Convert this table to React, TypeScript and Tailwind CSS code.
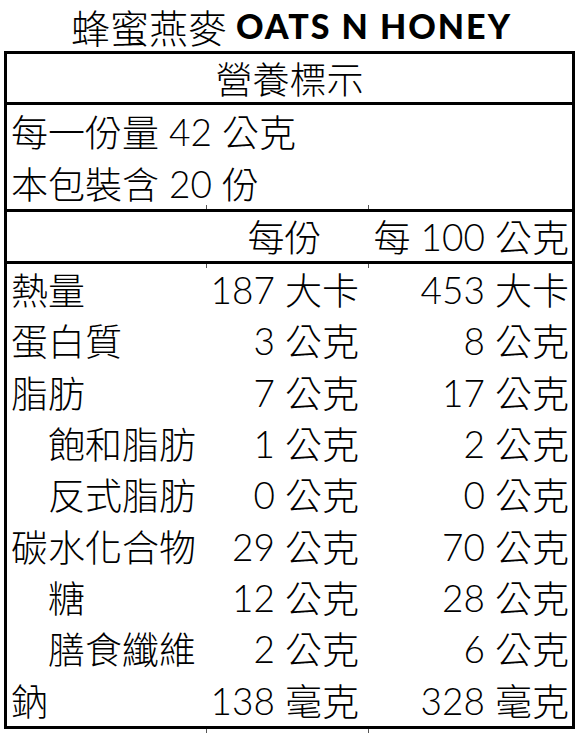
import React from "react";

const LATIN = { fontFamily: "'Lato', 'Noto Sans CJK TC', sans-serif" };
const CJK = { fontFamily: "'Noto Sans CJK TC', 'Noto Sans CJK SC', sans-serif" };

type Row = { label: string; indent?: boolean; a: [string, string]; b: [string, string] };

const rows: Row[] = [
  { label: "熱量", a: ["187", "大卡"], b: ["453", "大卡"] },
  { label: "蛋白質", a: ["3", "公克"], b: ["8", "公克"] },
  { label: "脂肪", a: ["7", "公克"], b: ["17", "公克"] },
  { label: "飽和脂肪", indent: true, a: ["1", "公克"], b: ["2", "公克"] },
  { label: "反式脂肪", indent: true, a: ["0", "公克"], b: ["0", "公克"] },
  { label: "碳水化合物", a: ["29", "公克"], b: ["70", "公克"] },
  { label: "糖", indent: true, a: ["12", "公克"], b: ["28", "公克"] },
  { label: "膳食纖維", indent: true, a: ["2", "公克"], b: ["6", "公克"] },
  { label: "鈉", a: ["138", "毫克"], b: ["328", "毫克"] },
];

function C({ children }: { children: React.ReactNode }) {
  return (
    <span className="font-extralight" style={CJK}>
      {children}
    </span>
  );
}

function N({ children }: { children: React.ReactNode }) {
  return (
    <span className="font-light" style={LATIN}>
      {children}
    </span>
  );
}

function Divider({ ticks }: { ticks?: "above" | "below" }) {
  return (
    <div className="relative h-[3px] w-full bg-black">
      {ticks === "above" && (
        <>
          <span className="absolute left-[199px] top-[-4px] h-[4px] w-[1px] bg-[#555]" />
          <span className="absolute left-[361px] top-[-4px] h-[4px] w-[1px] bg-[#555]" />
        </>
      )}
      {ticks === "below" && (
        <>
          <span className="absolute left-[199px] bottom-[-4px] h-[4px] w-[1px] bg-[#555]" />
          <span className="absolute left-[361px] bottom-[-4px] h-[4px] w-[1px] bg-[#555]" />
        </>
      )}
    </div>
  );
}

export default function App() {
  return (
    <div className="w-[581px] h-[737px] bg-white text-black overflow-hidden" style={LATIN}>
      <div className="h-[51px] pt-[1px] flex items-center justify-center pl-[2px]">
        <span className="text-[39px] leading-[50px] font-extralight" style={CJK}>
          蜂蜜燕麥
        </span>
        <span className="ml-[9px] text-[34px] leading-[50px] font-black tracking-[2px]" style={{ fontFamily: "'Lato', sans-serif" }}>
          OATS N HONEY
        </span>
      </div>

      <div className="relative ml-[4px] w-[571px] border-[3px] border-black flex flex-col text-[37px] leading-none">
        <div className="h-[48px] flex items-center justify-center">
          <C>營養標示</C>
        </div>
        <Divider />
        <div className="h-[52px] flex items-center pl-[4px] whitespace-pre">
          <C>每一份量</C>
          <N> 42 </N>
          <C>公克</C>
        </div>
        <div className="h-[52px] flex items-center pl-[4px] whitespace-pre">
          <C>本包裝含</C>
          <N> 20 </N>
          <C>份</C>
        </div>
        <Divider ticks="above" />
        <div className="h-[49px] grid grid-cols-[199px_162px_1fr]">
          <div />
          <div className="flex items-center justify-center pr-[5px]">
            <C>每份</C>
          </div>
          <div className="flex items-center justify-end pr-[3px] whitespace-pre">
            <C>每</C>
            <N> 100 </N>
            <C>公克</C>
          </div>
        </div>
        <Divider ticks="below" />
        {rows.map((r) => (
          <div key={r.label} className="h-[51.33px] grid grid-cols-[199px_162px_1fr]">
            <div className={`flex items-center whitespace-nowrap ${r.indent ? "pl-[41px]" : "pl-[4px]"}`}>
              <C>{r.label}</C>
            </div>
            <div className="flex items-center justify-end pr-[9px] whitespace-pre">
              <N>{r.a[0] + " "}</N>
              <C>{r.a[1]}</C>
            </div>
            <div className="flex items-center justify-end pr-[3px] whitespace-pre">
              <N>{r.b[0] + " "}</N>
              <C>{r.b[1]}</C>
            </div>
          </div>
        ))}
        <span className="absolute left-[199px] bottom-[-7px] h-[4px] w-[1px] bg-[#555]" />
        <span className="absolute left-[361px] bottom-[-7px] h-[4px] w-[1px] bg-[#555]" />
      </div>
    </div>
  );
}
